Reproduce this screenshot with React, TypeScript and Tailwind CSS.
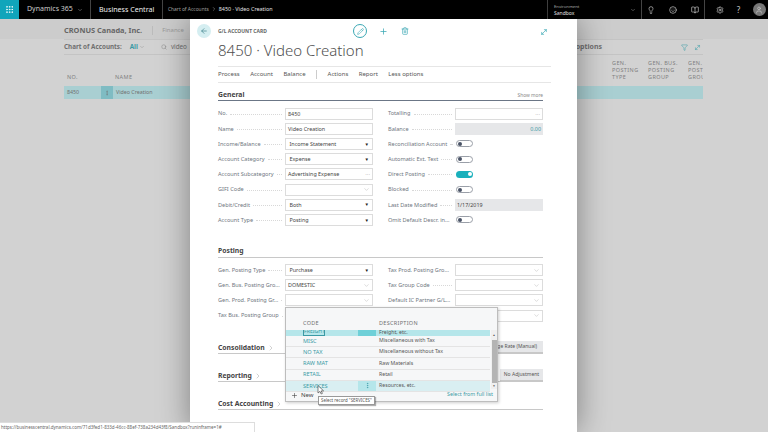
import { ArrowLeft, BookOpen, ChevronDown, ChevronRight, Filter, Grip, Lightbulb, MoreVertical, MoveDiagonal, Pencil, Plus, Search, Settings, Smile, Trash2, User } from "lucide-react";
import type { ReactNode } from "react";

type FieldKind = "text" | "select" | "lookup" | "dots" | "grey" | "toggle" | "toggleOn" | "none";

function Toggle({ on }: { on?: boolean }) {
  if (on) {
    return (
      <div className="flex h-[7px] w-[17px] items-center justify-end rounded-full bg-[#1ab0bc] px-[1.5px]">
        <div className="h-1 w-1 rounded-full bg-white" />
      </div>
    );
  }
  return (
    <div className="flex h-[7px] w-[17px] items-center rounded-full border border-[#9a9fa8] bg-white px-[1px]">
      <div className="h-1 w-1 rounded-full bg-[#4a5366]" />
    </div>
  );
}

function Field({ label, value, kind, right }: { label: string; value?: string; kind: FieldKind; right?: boolean }) {
  return (
    <div className="flex h-[15.2px] items-center">
      <div className="flex w-[67px] shrink-0 items-center gap-[3px] pr-[3px] text-[5.6px] whitespace-nowrap text-[#6f7680]">
        <span>{label}</span>
        <span className="mt-[1px] min-w-0 flex-1 border-b border-dotted border-[#d8d8d8]" />
      </div>
      {kind === "toggle" || kind === "toggleOn" ? (
        <div className="ml-[1px] flex h-3 items-center">
          <Toggle on={kind === "toggleOn"} />
        </div>
      ) : kind === "none" ? null : (
        <div
          className={`flex h-3 w-[88px] items-center justify-between px-[2px] text-[5.4px] text-[#444] ${
            kind === "grey" ? "bg-[#e6e7e9]" : "border border-[#dcdcdc] bg-white"
          }`}
        >
          <span className={right ? "ml-auto text-[#3a9aa5]" : kind === "select" ? "pl-[1.5px]" : ""}>{value}</span>
          {kind === "select" && <span className="mr-[1px] text-[4.5px] text-[#222]">▼</span>}
          {kind === "lookup" && <ChevronDown size={7} strokeWidth={1} className="text-[#888]" />}
          {kind === "dots" && <span className="text-[6px] leading-none text-[#999]">···</span>}
        </div>
      )}
    </div>
  );
}

function SectionHead({ title, more, children }: { title: string; more?: boolean; children?: ReactNode }) {
  return (
    <div className="flex h-[19px] items-end gap-[2px] border-b border-[#c8c8c8] text-[6.8px] font-bold text-[#444]">
      <span>{title}</span>
      {more && <ChevronRight size={8} strokeWidth={1} className="mb-[1px] text-[#777]" />}
      {children}
    </div>
  );
}

function DropRow({ code, desc, hover }: { code: string; desc: string; hover?: boolean }) {
  return (
    <div className={`flex h-[11.2px] items-center border-b border-[#e4e4e4] text-[5.2px] ${hover ? "bg-[#d9eff2]" : "bg-[#f6f7f8]"}`}>
      <span className="w-[72px] pl-[17px] text-[5.6px] text-[#3a9aa5]">{code}</span>
      <span className={`flex h-full w-[18px] items-center justify-center ${hover ? "bg-[#b5e6ea]" : ""}`}>
        {hover && <MoreVertical size={7} className="text-[#3a9aa5]" />}
      </span>
      <span className="pl-[3px] text-[#555]">{desc}</span>
    </div>
  );
}

export default function App() {
  return (
    <div className="relative flex h-[432px] w-[768px] flex-col overflow-hidden bg-[#d2d2d2] font-['Lato','Open_Sans',sans-serif]">
      <header className="flex h-[19px] shrink-0 items-center bg-black whitespace-nowrap text-white">
        <div className="flex h-full w-[19px] items-center justify-center bg-[#10a5bb]">
          <Grip size={9} />
        </div>
        <div className="flex h-full w-[72px] items-center justify-between border-r border-[#444] pl-2 pr-[7px] text-[7px] text-[#ccc]">
          Dynamics 365 <ChevronDown size={6} className="text-[#999]" />
        </div>
        <div className="flex h-full w-[72px] items-center border-r border-[#444] pl-2 text-[7.1px] text-[#eee]">Business Central</div>
        <div className="flex flex-1 items-center gap-[2px] pl-[5px] text-[4.9px]">
          <span className="text-[#aaa]">Chart of Accounts</span>
          <ChevronRight size={6} className="text-[#aaa]" />
          <span className="text-[5.4px]">8450 · Video Creation</span>
        </div>
        <div className="flex h-full w-[95px] items-center justify-between border-x border-[#444] pl-[6px] pr-[5px]">
          <div className="flex flex-col text-[4.2px] leading-[6px]">
            <span className="text-[#bbb]">Environment</span>
            <span className="text-[5px]">Sandbox</span>
          </div>
          <ChevronDown size={6} className="text-[#999]" />
        </div>
        <div className="flex h-full w-[63px] items-center justify-between border-r border-[#444] px-[5px] text-[#ccc]">
          <Lightbulb size={8} />
          <Smile size={8} />
          <BookOpen size={8} />
        </div>
        <div className="flex h-full w-[63px] items-center justify-between pl-[11px] pr-[2px] text-[#ccc]">
          <Settings size={8} />
          <span className="text-[8px]">?</span>
          <span className="flex h-[13px] w-[13px] items-center justify-center rounded-full bg-[#777]">
            <User size={8} />
          </span>
        </div>
      </header>

      {/* greyed out list page behind the card */}
      <div className="flex flex-1 flex-col">
        <div className="flex h-[20px] items-center bg-[#cccccc] pl-[64px] pt-[3px] text-[7.4px] font-bold whitespace-nowrap text-[#666]">
          CRONUS Canada, Inc.
          <span className="ml-[10px] border-l border-[#bbb] pl-[9px] text-[6px] font-normal text-[#999]">Finance</span>
        </div>
        <div className="ml-[64px] w-[639px]">
          <div className="flex h-[16px] items-center border-y border-[#c4c4c4] text-[6.3px] font-bold whitespace-nowrap text-[#707070]">
            Chart of Accounts:
            <span className="ml-[8px] text-[#3a9aa5]">All</span>
            <ChevronDown size={6} className="ml-[1px] text-[#999]" />
            <Search size={6} className="ml-[16px] text-[#888]" />
            <span className="ml-1 font-normal">video</span>
            <span className="ml-auto mr-[79px] text-[7px]">Less options</span>
            <Filter size={7} className="mr-[6px] text-[#4ba3ac]" />
            <MoveDiagonal size={7} className="mr-[2px] text-[#4ba3ac]" />
          </div>
          <div className="flex h-[31px] items-end pb-[5px] text-[5.5px] uppercase leading-[7px] tracking-[0.4px] text-[#808080]">
            <span className="ml-[3px] w-[48px]">No.</span>
            <span className="w-[497px]">Name</span>
            <span className="w-[36px]">Gen.<br />Posting<br />Type</span>
            <span className="w-[40px]">Gen. Bus.<br />Posting<br />Group</span>
            <span className="w-[15px] overflow-hidden whitespace-nowrap">Gen. Prod.<br />Posting<br />Group</span>
          </div>
          <div className="flex h-[13px] items-center bg-[#a9cfd2] text-[5.3px] text-[#707070]">
            <span className="w-[37px] pl-[3px]">8450</span>
            <span className="flex h-full w-[12px] items-center justify-center bg-[#7fbcc3]">
              <MoreVertical size={6} />
            </span>
            <span className="ml-[3px]">Video Creation</span>
          </div>
        </div>
      </div>

      {/* the card window lies over the list */}
      <div className="absolute bottom-0 left-[190px] top-[19px] w-[387px] bg-white pl-[28px] pr-[26px] shadow-[0_0_30px_rgba(0,0,0,0.4)]">
        <div className="absolute left-[7px] top-[5px] flex h-[14px] w-[14px] items-center justify-center rounded-full bg-[#d5eef1]">
          <ArrowLeft size={8} className="text-[#3a7f8a]" />
        </div>
        <div className="relative h-[47px]">
          <div className="pt-[9px] text-[5px] font-bold uppercase leading-[7px] text-[#666]">G/L Account Card</div>
          <div className="mt-[4px] font-['Open_Sans',sans-serif] text-[15px] font-light leading-[22px] text-[#505050]">8450 · Video Creation</div>
          <div className="absolute left-[135px] top-[5px] flex items-center gap-[10px] text-[#3aa8b4]">
            <span className="flex h-[14px] w-[14px] items-center justify-center rounded-full border border-[#3aa8b4]">
              <Pencil size={7} />
            </span>
            <Plus size={9} className="ml-[2px]" />
            <Trash2 size={8} className="ml-[3px]" />
          </div>
          <MoveDiagonal size={8} className="absolute right-[3px] top-[9px] text-[#3aa8b4]" />
        </div>
        <div className="flex h-[17px] items-center gap-[10.5px] border-y border-[#e6e6e6] text-[6px] text-[#555]">
          <span>Process</span>
          <span>Account</span>
          <span>Balance</span>
          <span className="h-[9px] border-l border-[#ccc]" />
          <span>Actions</span>
          <span>Report</span>
          <span>Less options</span>
        </div>

        <div className="pr-[8px]">
          <div className="flex h-[18px] items-end justify-between border-b border-[#6b7686] text-[6.8px] font-bold text-[#444]">
            General
            <span className="mb-[1px] text-[4.8px] font-normal text-[#888]">Show more</span>
          </div>
          <div className="mt-[5px] grid grid-cols-[170px_1fr]">
            <div>
              <Field label="No." value="8450" kind="text" />
              <Field label="Name" value="Video Creation" kind="text" />
              <Field label="Income/Balance" value="Income Statement" kind="select" />
              <Field label="Account Category" value="Expense" kind="select" />
              <Field label="Account Subcategory" value="Advertising Expense" kind="dots" />
              <Field label="GIFI Code" kind="lookup" />
              <Field label="Debit/Credit" value="Both" kind="select" />
              <Field label="Account Type" value="Posting" kind="select" />
            </div>
            <div>
              <Field label="Totalling" kind="dots" />
              <Field label="Balance" value="0.00" kind="grey" right />
              <Field label="Reconciliation Account" kind="toggle" />
              <Field label="Automatic Ext. Text" kind="toggle" />
              <Field label="Direct Posting" kind="toggleOn" />
              <Field label="Blocked" kind="toggle" />
              <Field label="Last Date Modified" value="1/17/2019" kind="grey" />
              <Field label="Omit Default Descr. in..." kind="toggle" />
            </div>
          </div>

          <div className="mt-[11px]">
            <SectionHead title="Posting" />
          </div>
          <div className="mt-[5px] grid grid-cols-[170px_1fr]">
            <div>
              <Field label="Gen. Posting Type" value="Purchase" kind="select" />
              <Field label="Gen. Bus. Posting Gro..." value="DOMESTIC" kind="lookup" />
              <Field label="Gen. Prod. Posting Gr..." kind="lookup" />
              <Field label="Tax Bus. Posting Group" kind="none" />
            </div>
            <div>
              <Field label="Tax Prod. Posting Gro..." kind="lookup" />
              <Field label="Tax Group Code" kind="lookup" />
              <Field label="Default IC Partner G/L..." kind="lookup" />
              <Field label="" kind="lookup" />
            </div>
          </div>
          <div className="mt-[12px]">
            <SectionHead title="Consolidation" more>
              <span className="ml-auto flex h-3 w-[90px] items-center justify-end border-b border-[#c8c8c8] bg-[#e6e7e9] pr-[6px] text-[5px] font-normal text-[#555]">
                Average Rate (Manual)
              </span>
            </SectionHead>
          </div>
          <div className="mt-[9px]">
            <SectionHead title="Reporting" more>
              <span className="ml-auto flex h-3 w-[43px] items-center justify-center border-b border-[#c8c8c8] bg-[#e6e7e9] text-[5px] font-normal text-[#555]">
                No Adjustment
              </span>
            </SectionHead>
          </div>
          <div className="mt-[9px]">
            <SectionHead title="Cost Accounting" more />
          </div>
        </div>
      </div>

      {/* lookup dropdown */}
      <div className="absolute left-[285px] top-[307px] flex h-[95px] w-[213px] flex-col border border-[#bdbdbd] bg-[#f6f7f8] shadow-[1px_1px_3px_rgba(0,0,0,0.2)]">
        <div className="flex h-[22px] shrink-0 items-end pb-[3px] text-[5.5px] uppercase tracking-[0.3px] text-[#707070]">
          <span className="w-[93px] pl-[17px]">Code</span>
          <span>Description</span>
        </div>
        <div className="flex min-h-0 flex-1">
          <div className="min-w-0 flex-1">
            <div className="flex h-[6px] items-end overflow-hidden bg-[#b5e6ea] text-[5.2px] leading-[8px]">
              <span className="ml-[17px] w-[22px] shrink-0 border-x border-b border-[#3a9aa5] text-center text-[#3a9aa5]">FREIGHT</span>
              <span className="ml-[33px] h-full w-[18px] shrink-0 bg-[#6fd0d8]" />
              <span className="pl-[3px] text-[#555]">Freight, etc.</span>
            </div>
            <DropRow code="MISC" desc="Miscellaneous with Tax" />
            <DropRow code="NO TAX" desc="Miscellaneous without Tax" />
            <DropRow code="RAW MAT" desc="Raw Materials" />
            <DropRow code="RETAIL" desc="Retail" />
            <DropRow code="SERVICES" desc="Resources, etc." hover />
          </div>
          <div className="ml-[1px] flex w-[6px] flex-col items-center bg-[#f0f0f0] text-[3px] leading-none text-[#555]">
            <span className="flex h-[10px] items-center">▲</span>
            <div className="w-[5px] flex-1 bg-[#b4b4b4]" />
            <span className="flex h-[6px] items-center">▼</span>
          </div>
        </div>
        <div className="flex h-[12px] shrink-0 items-center justify-between pl-[5px] pr-[4px] text-[6px] text-[#444]">
          <span className="flex items-center gap-[3px]">
            <Plus size={7} /> New
          </span>
          <span className="text-[5.3px] text-[#3a9aa5]">Select from full list</span>
        </div>
      </div>

      {/* tooltip and pointer */}
      <div className="absolute left-[318px] top-[396px] flex h-[9px] items-center border border-[#999] bg-white px-[2px] text-[4.4px] whitespace-nowrap text-[#555] shadow-[1px_1px_1px_rgba(0,0,0,0.3)]">
        Select record "SERVICES"
      </div>
      <svg className="absolute left-[317px] top-[385px]" width="7" height="10" viewBox="0 0 7 10">
        <path d="M1 0.5v7.5l2-1.6 1.2 2.6 1.2-.6-1.2-2.5h2.4z" fill="#fff" stroke="#333" strokeWidth="0.6" />
      </svg>

      {/* status bar url */}
      <div className="absolute bottom-0 left-0 flex h-[10px] w-[255px] items-center border-r border-t border-[#ddd] bg-white pl-[1px] text-[4.5px] whitespace-nowrap text-[#666]">
        https://businesscentral.dynamics.com/71d3fed1-833d-46cc-88ef-738a234d43f8/Sandbox?runinframe=1#
      </div>
    </div>
  );
}
